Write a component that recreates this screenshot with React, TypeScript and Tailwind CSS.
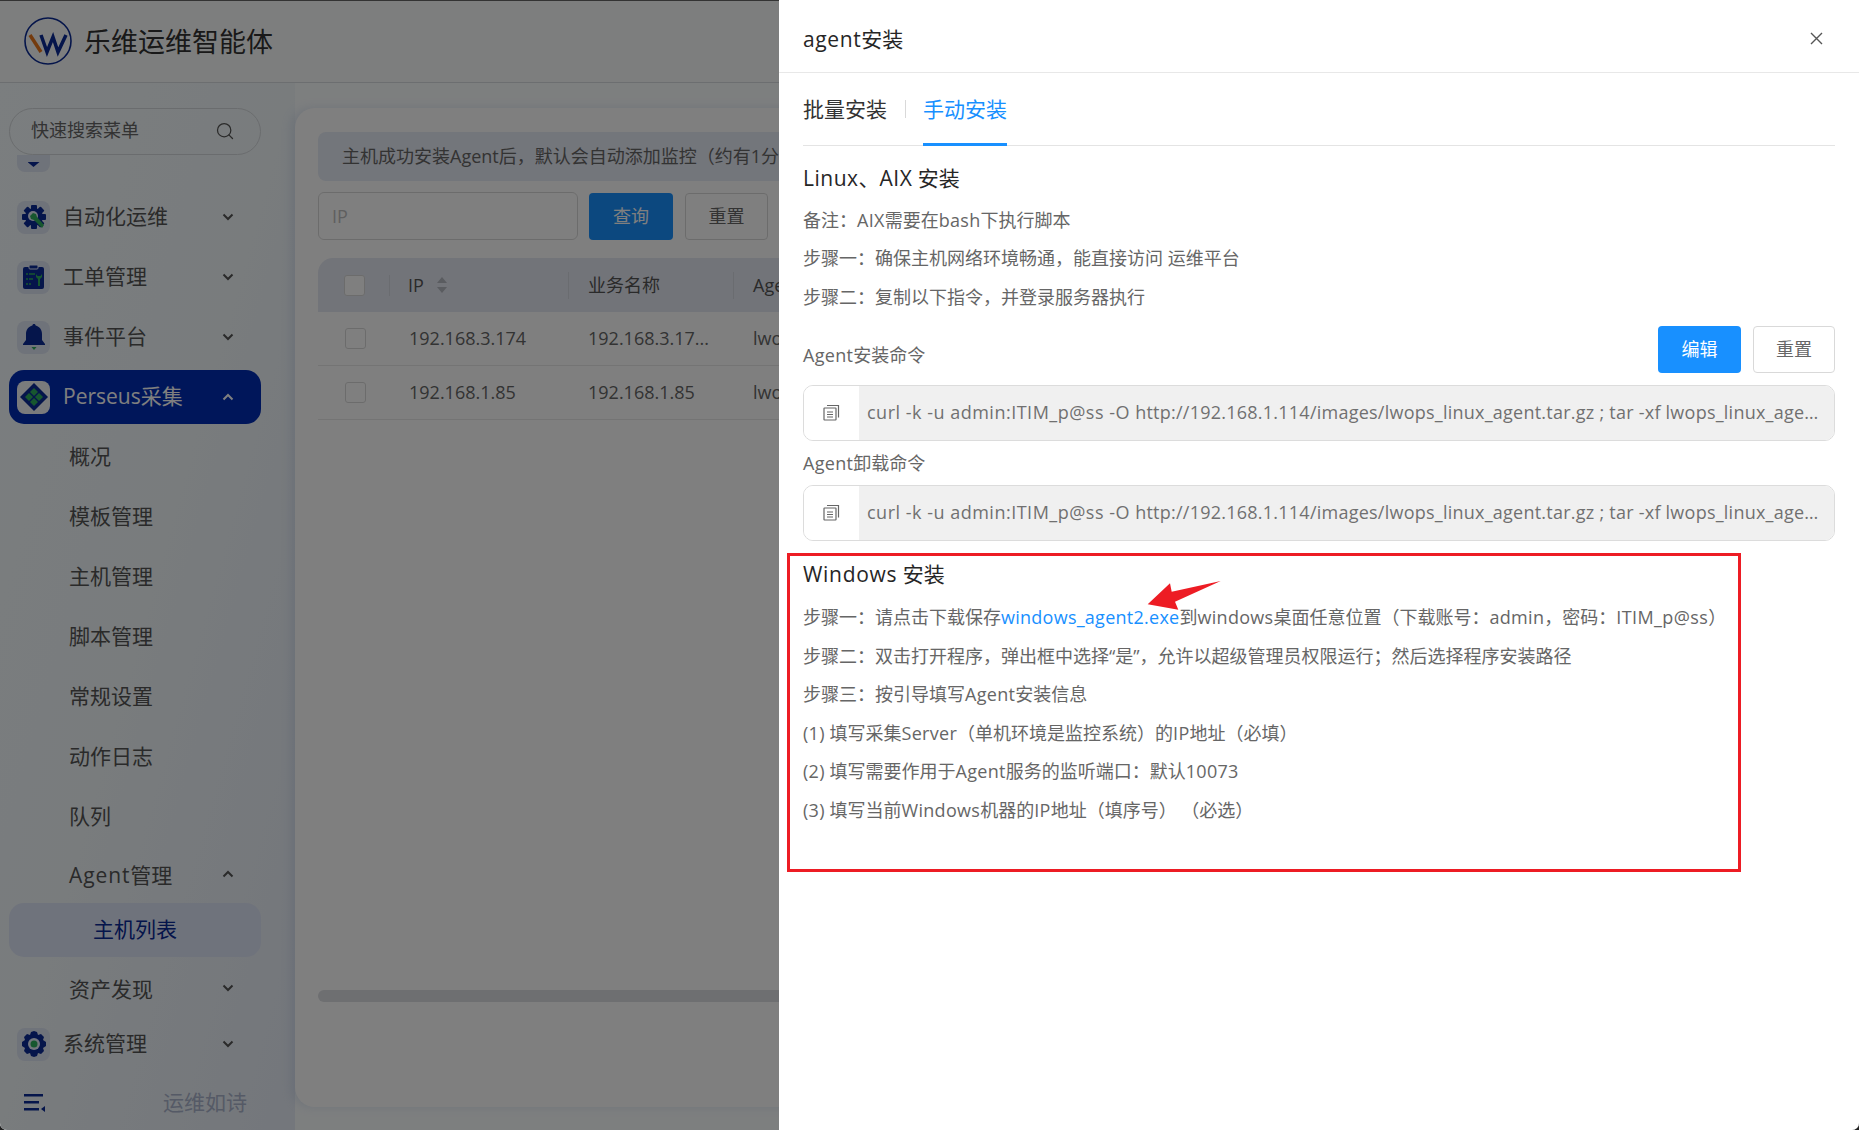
import { Search } from 'lucide-react';

const font = 'font-["Open_Sans","Noto_Sans_CJK_SC",sans-serif]';
const curlHead = 'curl -k -u admin:ITIM_p@ss -O ';
const curlTail = 'http://192.168.1.114/images/lwops_linux_agent.tar.gz ; tar -xf lwops_linux_agent.tar.gz ; cd lwops_linux_agent ; sh install.sh';

function Chevron({ up = false }: { up?: boolean }) {
  return (
    <svg width="12" height="8" viewBox="0 0 12 8" fill="none" stroke="currentColor" strokeWidth="2" className="shrink-0">
      <polyline points={up ? '1.5,6.5 6,2 10.5,6.5' : '1.5,1.5 6,6 10.5,1.5'} />
    </svg>
  );
}

function GearIcon() {
  return (
    <svg width="26" height="26" viewBox="0 0 26 26">
      <g fill="#0a2a96">
        {[0, 45, 90, 135].map((r) => <rect key={r} x="10" y="1" width="6" height="24" rx="1" transform={`rotate(${r} 13 13)`} />)}
        <circle cx="13" cy="13" r="9" />
      </g>
      <circle cx="12" cy="12" r="5" fill="#e4ecfb" />
      <path d="M12 9l3 1 1 3 7 8-2 3-8-8-3-1-1-3z" fill="#2fae5e" />
    </svg>
  );
}

function TicketIcon() {
  return (
    <svg width="22" height="26" viewBox="0 0 22 26">
      <rect x="0" y="3" width="21" height="22" rx="2" fill="#0a2a96" />
      <rect x="6" y="1" width="9" height="4" rx="1" fill="#0a2a96" stroke="#e4ecfb" strokeWidth="1" />
      <path d="M3 10h9M3 15h7M3 20h5" stroke="#2fae5e" strokeWidth="1.6" strokeDasharray="2 1 6 0" />
      <path d="M13 10v3l2 2v7h2v-7l2-2v-3l-1.5 2h-3z" fill="#2fae5e" />
    </svg>
  );
}

function BellIcon() {
  return (
    <svg width="24" height="28" viewBox="0 0 24 28">
      <path d="M12 1c1 0 1.6.7 1.6 1.6C17.500 3.500 20 7 20 11v6l3 4v1H1v-1l3-4v-6c0-4 2.500-7.500 6.400-8.400C10.400 1.700 11 1 12 1z" fill="#0a2a96" />
      <path d="M9.500 24h5l-2.500 3z" fill="#2fae5e" />
    </svg>
  );
}

function DiamondIcon() {
  return (
    <svg width="28" height="28" viewBox="0 0 28 28">
      <path d="M14 0l14 14-14 14L0 14z" fill="#0a2a96" />
      <g fill="#2fae5e">
        <path d="M14 5l4 4-4 4-4-4z" />
        <path d="M14 15l4 4-4 4-4-4z" />
        <path d="M9 10l4 4-4 4-4-4z" />
        <path d="M19 10l4 4-4 4-4-4z" />
      </g>
    </svg>
  );
}

function CogIcon() {
  return (
    <svg width="26" height="28" viewBox="0 0 26 28">
      <path d="M13 1l3 1 1 3 3-1 3 3-1 3 3 2v4l-3 2 1 3-3 3-3-1-1 3-3 1-3-1-1-3-3 1-3-3 1-3-3-2v-4l3-2-1-3 3-3 3 1 1-3z" fill="#0a2a96" />
      <circle cx="13" cy="14" r="6" fill="#e4ecfb" />
      <circle cx="13" cy="14" r="3.500" fill="#2fae5e" />
    </svg>
  );
}

function IconBox({ children, active = false }: { children: React.ReactNode; active?: boolean }) {
  return (
    <span className={`flex h-[33px] w-[33px] shrink-0 items-center justify-center rounded-[8px] ${active ? 'bg-[#f4f6f8]' : 'bg-[#dfe6f4]'}`}>
      {children}
    </span>
  );
}

function TopRow({ icon, label, up = false }: { icon: React.ReactNode; label: string; up?: boolean }) {
  return (
    <div className="flex h-[54px] items-center pl-[8px] pr-[27px] text-[21px] text-[#555]">
      <IconBox>{icon}</IconBox>
      <span className="ml-[13px] flex-1">{label}</span>
      <Chevron up={up} />
    </div>
  );
}

function SubRow({ label, arrow }: { label: React.ReactNode; arrow?: 'up' | 'down' }) {
  return (
    <div className="flex h-[54px] items-center pl-[60px] pr-[27px] text-[21px] text-[#555]">
      <span className="flex-1">{label}</span>
      {arrow && <span className="-mt-[4px] flex"><Chevron up={arrow === 'up'} /></span>}
    </div>
  );
}

function CopyIcon() {
  return (
    <svg width="17" height="17" viewBox="0 0 17 17" fill="none" stroke="#666" strokeWidth="1.200">
      <rect x="1" y="4" width="12" height="12" rx="0.500" />
      <path d="M4 1.500h11.500v12" />
      <path d="M4 8h6M4 10.500h6M4 13h6" />
    </svg>
  );
}

function Checkbox() {
  return <span className="block h-[21px] w-[21px] rounded-[3px] border border-[#d9d9d9] bg-white" />;
}

function CmdBox() {
  return (
    <div className="flex h-[56px] overflow-hidden rounded-[10px] border border-[#dcdcdc]">
      <div className="flex w-[55px] shrink-0 items-center justify-center bg-white"><CopyIcon /></div>
      <div className="flex min-w-0 flex-1 items-center bg-[#f0f0f0] pl-[8px] pr-[12px] text-[18px] tracking-[0.24px] text-[#707070]">
        <span className="truncate"><span className="tracking-[0.5px]">{curlHead}</span>{curlTail}</span>
      </div>
    </div>
  );
}

function Step({ children }: { children: React.ReactNode }) {
  return <div className="flex h-[38.500px] items-center whitespace-pre text-[18px] text-[#666]">{children}</div>;
}

// the latin runs sit a little wider in the screenshot than in Open Sans
function L({ children }: { children: React.ReactNode }) {
  return <span className="tracking-[0.3px]">{children}</span>;
}

export default function App() {
  return (
    <div className="h-[1130px] w-[1859px] bg-[#222]">
      <div className={`${font} relative h-[1130px] w-[1859px] overflow-hidden rounded-b-[7px] bg-[#fbfeff]`}>
        <div className="flex h-[83px] items-center border-b border-[#d9dde0] bg-[#fbfdfd] pl-[24px]">
          <svg width="48" height="48" viewBox="0 0 48 48" fill="none">
            <circle cx="24" cy="24" r="23" stroke="#0a2a96" strokeWidth="1.600" />
            <path d="M6 18l11 17" stroke="#e8761c" strokeWidth="3.500" />
            <path d="M17 18l6 17 6-15 5 15 8-17" stroke="#0a2a96" strokeWidth="3.500" />
          </svg>
          <span className="ml-[12px] pt-[2px] text-[27px] text-[#333]">乐维运维智能体</span>
        </div>

        <div className="flex h-[1047px]">
          <aside className="flex w-[295px] shrink-0 flex-col bg-gradient-to-br from-[#f6fcff] via-[#f2f8fb] to-[#e8eef8]">
            <div className="ml-[9px] mr-[34px] mt-[25px] flex h-[47px] shrink-0 items-center justify-between rounded-full border border-[#d5d9dc] pb-[2px] pl-[21px] pr-[25px] text-[18px] text-[#666]">
              <span>快速搜索菜单</span>
              <Search size={20} strokeWidth={1.500} className="text-[#555]" />
            </div>
            <nav className="pl-[9px] pr-[34px]">
              <div className="flex h-[17px] items-end overflow-hidden pl-[8px]">
                <span className="flex h-[33px] w-[33px] shrink-0 items-end justify-center rounded-[8px] bg-[#dfe6f4] pb-[5px]">
                  <span className="h-[5px] w-[12px] bg-[#0a2a96] [clip-path:polygon(0_0,100%_0,50%_100%)]" />
                </span>
              </div>
              <div className="mb-[6px] h-[12px]" />
              <div className="mb-[6px]"><TopRow icon={<GearIcon />} label="自动化运维" /></div>
              <div className="mb-[6px]"><TopRow icon={<TicketIcon />} label="工单管理" /></div>
              <div className="mb-[6px]"><TopRow icon={<BellIcon />} label="事件平台" /></div>
              <div className="mb-[6px] flex h-[54px] items-center rounded-[15px] bg-[#002cb4] pl-[8px] pr-[27px] text-[21px] text-white">
                <IconBox active><DiamondIcon /></IconBox>
                <span className="ml-[13px] flex-1">Perseus采集</span>
                <Chevron up />
              </div>
              <div className="mb-[6px]"><SubRow label="概况" /></div>
              <div className="mb-[6px]"><SubRow label="模板管理" /></div>
              <div className="mb-[6px]"><SubRow label="主机管理" /></div>
              <div className="mb-[6px]"><SubRow label="脚本管理" /></div>
              <div className="mb-[6px]"><SubRow label="常规设置" /></div>
              <div className="mb-[6px]"><SubRow label="动作日志" /></div>
              <div className="mb-[5px]"><SubRow label="队列" /></div>
              <SubRow label={<><span className="tracking-[0.9px]">Agent</span>管理</>} arrow="up" />
              <div className="mb-[6px] flex h-[54px] items-center rounded-[15px] bg-[#dfe6f8] pl-[84px] text-[21px] text-[#0a2a96]">主机列表</div>
              <SubRow label="资产发现" arrow="down" />
              <TopRow icon={<CogIcon />} label="系统管理" />
            </nav>
            <div className="flex h-[59px] items-center pl-[24px] pr-[48px] pt-[4px]">
              <svg width="22" height="18" viewBox="0 0 22 18" fill="#0a2a96" className="shrink-0">
                <rect x="0" y="0" width="19" height="2.500" />
                <rect x="0" y="7" width="15" height="2.500" />
                <rect x="0" y="14" width="15" height="2.500" />
                <path d="M21 12v6l-4-3z" />
              </svg>
              <span className="ml-auto text-[21px] text-[#aab4cc]">运维如诗</span>
            </div>
          </aside>

          <main className="mb-[23px] mt-[25px] flex min-w-0 flex-1 flex-col overflow-hidden rounded-l-[20px] bg-white pb-[105px] pl-[23px] pt-[24px] shadow-[-4px_0_10px_rgba(150,170,210,0.25)]">
            <div className="flex h-[49px] items-center whitespace-nowrap rounded-[8px] bg-[#e6ecf6] pl-[24px] text-[18px] text-[#666]">
              主机成功安装Agent后，默认会自动添加监控（约有1分钟延迟）
            </div>
            <div className="mt-[11px] flex items-center">
              <div className="flex h-[48px] w-[260px] items-center rounded-[6px] border border-[#d9d9d9] pl-[13px] text-[18px] text-[#bfbfbf]">IP</div>
              <div className="ml-[11px] flex h-[47px] w-[84px] items-center justify-center rounded-[4px] bg-[#1890ff] text-[18px] text-white">查询</div>
              <div className="ml-[12px] flex h-[47px] w-[83px] items-center justify-center rounded-[4px] border border-[#d9d9d9] text-[18px] text-[#666]">重置</div>
            </div>
            <div className="mt-[18px] flex h-[54px] items-center rounded-t-[15px] bg-[#e4e8f2] text-[18px] text-[#555]">
              <div className="flex w-[72px] items-center justify-end border-r border-[#d4d8e0] pr-[24px]"><Checkbox /></div>
              <div className="flex w-[179px] items-center gap-[12px] border-r border-[#d4d8e0] pl-[18px]">
                IP
                <svg width="12" height="16" viewBox="0 0 12 16" fill="#b4b8c0"><path d="M6 0l5 6H1zM6 16l-5-6h10z" /></svg>
              </div>
              <div className="w-[165px] border-r border-[#d4d8e0] pl-[19px]">业务名称</div>
              <div className="pl-[19px]">Agent版本</div>
            </div>
            {[
              ['192.168.3.174', '192.168.3.17...'],
              ['192.168.1.85', '192.168.1.85'],
            ].map(([ip, name]) => (
              <div key={ip} className="flex h-[54px] items-center border-b border-[#e8e8e8] text-[18px] text-[#666]">
                <div className="flex w-[72px] justify-end pr-[24px]"><Checkbox /></div>
                <div className="w-[179px] pl-[19px]">{ip}</div>
                <div className="w-[165px] pl-[19px]">{name}</div>
                <div className="pl-[19px]">lwops</div>
              </div>
            ))}
            <div className="mt-auto h-[12px] rounded-full bg-[#dcdee2]" />
          </main>
        </div>

        <div className="absolute inset-0 bg-black/50" />
        <div className="absolute left-0 right-0 top-0 h-[1px] bg-[#333]" />

        <section className="absolute bottom-0 left-[779px] right-0 top-0 bg-white pt-[1px]">
          <div className="flex h-[72px] items-center justify-between border-b border-[#e8e8e8] pl-[24px] pr-[36px]">
            <span className="pt-[7px] text-[21px] text-[#262626]"><span className="tracking-[0.6px]">agent</span>安装</span>
            <svg width="13" height="13" viewBox="0 0 13 13" stroke="#555" strokeWidth="1.400" className="mt-[3px]"><path d="M1 1l11 11M12 1L1 12" /></svg>
          </div>
          <div className="px-[24px]">
            <div className="flex h-[73px] items-center border-b border-[#e4e4e4] text-[21px]">
              <span className="pt-[2px] text-[#333]">批量安装</span>
              <span className="ml-[18px] mr-[17px] h-[18px] w-px bg-[#d9d9d9]" />
              <span className="relative flex h-full items-center pt-[2px] text-[#1890ff]">
                手动安装
                <span className="absolute -bottom-px left-0 right-0 h-[3px] bg-[#1890ff]" />
              </span>
            </div>
            <h3 className="mt-[9px] flex h-[46px] items-center whitespace-pre pt-[2px] text-[21px] font-normal text-[#262626]">
              <span className="tracking-[0.5px]">Linux</span>、<span className="tracking-[0.5px]">AIX</span> 安装
            </h3>
            <Step>备注：<L>AIX</L>需要在<L>bash</L>下执行脚本</Step>
            <Step>步骤一：确保主机网络环境畅通，能直接访问 运维平台</Step>
            <Step>步骤二：复制以下指令，并登录服务器执行</Step>
            <div className="mt-[10px] flex h-[46px] items-center justify-between">
              <span className="pt-[12px] text-[18px] text-[#666]"><L>Agent</L>安装命令</span>
              <div className="flex gap-[12px]">
                <span className="flex h-[47px] w-[83px] items-center justify-center rounded-[4px] bg-[#1890ff] text-[18px] text-white">编辑</span>
                <span className="flex h-[47px] w-[82px] items-center justify-center rounded-[4px] border border-[#d9d9d9] text-[18px] text-[#666]">重置</span>
              </div>
            </div>
            <div className="mt-[12px]"><CmdBox /></div>
            <div className="flex h-[44px] items-center pt-[2px] text-[18px] text-[#666]"><span><L>Agent</L>卸载命令</span></div>
            <CmdBox />
            <div className="relative -ml-[16px] mt-[12px] h-[319px] w-[954px] border-[3px] border-[#ed1c24] pl-[13px]">
              <svg width="75" height="30" viewBox="0 0 75 30" className="absolute left-[357px] top-[25px]">
                <path d="M0.700 23.300L23 2.300l1.700 8.400L73.700 0 28 20.700l3.300 8z" fill="#ed1c24" />
              </svg>
              <h3 className="flex h-[38px] items-center whitespace-pre text-[21px] font-normal text-[#262626]">
                <span className="tracking-[0.7px]">Windows</span> 安装
              </h3>
              <div className="mt-[5px]">
                <Step>步骤一：请点击下载保存<span className="tracking-[0.26px] text-[#1890ff]">windows_agent2.exe</span>到<L>windows</L>桌面任意位置（下载账号：<L>admin</L>，密码：<span className="tracking-[0.4px]">ITIM_p@ss</span>）</Step>
                <Step>步骤二：双击打开程序，弹出框中选择“是”，允许以超级管理员权限运行；然后选择程序安装路径</Step>
                <Step>步骤三：按引导填写<L>Agent</L>安装信息</Step>
                <Step><L>(1)</L> 填写采集<L>Server</L>（单机环境是监控系统）的<L>IP</L>地址（必填）</Step>
                <Step><L>(2)</L> 填写需要作用于<L>Agent</L>服务的监听端口：默认<L>10073</L></Step>
                <Step><L>(3)</L> 填写当前<L>Windows</L>机器的<L>IP</L>地址（填序号） （必选）</Step>
              </div>
            </div>
          </div>
        </section>
      </div>
    </div>
  );
}
